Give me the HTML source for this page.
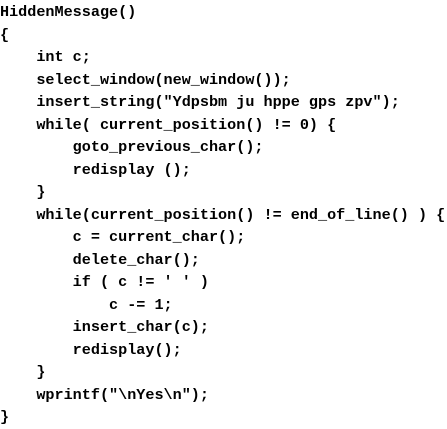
<!DOCTYPE html>
<html><head><meta charset="utf-8"><style>
html,body{margin:0;padding:0;background:#fff;width:447px;height:404px;overflow:hidden}
pre{margin:0;padding:0;position:absolute;left:0;top:1px;font-family:"Liberation Mono","DejaVu Sans Mono",monospace;font-size:15.15px;line-height:22.5px;font-weight:bold;color:#000;font-kerning:none;font-variant-ligatures:none;letter-spacing:0;white-space:pre}
</style></head><body><pre>HiddenMessage()
{
    int c;
    select_window(new_window());
    insert_string("Ydpsbm ju hppe gps zpv");
    while( current_position() != 0) {
        goto_previous_char();
        redisplay ();
    }
    while(current_position() != end_of_line() ) {
        c = current_char();
        delete_char();
        if&#160;(&#160;c&#160;!=&#160;'&#160;'&#160;)
            c -= 1;
        insert_char(c);
        redisplay();
    }
    wprintf("\nYes\n");
}</pre></body></html>
